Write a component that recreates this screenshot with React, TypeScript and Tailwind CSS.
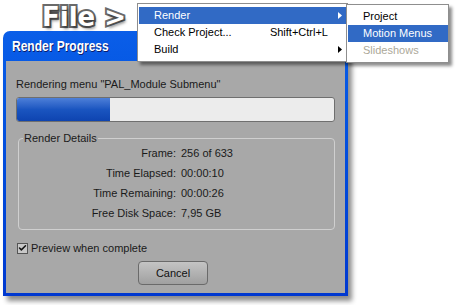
import { Check } from "lucide-react";

const font = "font-['Liberation_Sans',Arial,sans-serif]";

function Arrow({ color = "#000" }: { color?: string }) {
  return (
    <svg width="4" height="7" viewBox="0 0 4 7" className="shrink-0">
      <path d="M0 0 L4 3.5 L0 7 Z" fill={color} />
    </svg>
  );
}

function MenuRow({
  label,
  shortcut,
  active,
  arrow,
  disabled,
}: {
  label: string;
  shortcut?: string;
  active?: boolean;
  arrow?: boolean;
  disabled?: boolean;
}) {
  return (
    <div
      className={`flex h-[17px] items-center pl-[15px] pr-[5px] ${
        active ? "bg-[#316ac5] text-white" : disabled ? "text-[#aca899]" : "text-black"
      }`}
    >
      <span className="flex-1">{label}</span>
      {shortcut && <span className="mr-[14px]">{shortcut}</span>}
      {arrow && <Arrow color={active ? "#fff" : "#000"} />}
    </div>
  );
}

function DetailRow({ label, value }: { label: string; value: string }) {
  return (
    <div className="flex h-[20px] items-center">
      <span className="w-[157px] text-right">{label}</span>
      <span className="ml-[5px]">{value}</span>
    </div>
  );
}

export default function App() {
  return (
    <div className={`relative h-[305px] w-[460px] overflow-hidden bg-white text-[11px] ${font}`}>
      {/* File > heading */}
      <div className="absolute left-[42px] top-[-2px] font-['DejaVu_Sans',sans-serif] text-[26px] font-black text-white [-webkit-text-stroke:4px_#6a6a6a] [paint-order:stroke_fill] [text-shadow:2px_3px_3px_rgba(0,0,0,0.45)]">
        File &gt;
      </div>

      {/* dialog */}
      <div className="ml-[3px] mt-[31px] flex h-[265px] w-[345px] flex-col rounded-t-[7px] bg-gradient-to-b from-[#0a5ee8] to-[#0038d0] px-[3px] pb-[3px] shadow-[4px_5px_5px_rgba(0,0,0,0.45)]">
        <div className="flex h-[30px] shrink-0 items-center pl-[6px]">
          <span className="origin-left scale-x-[0.8] text-[15px] font-bold text-white [text-shadow:1px_1px_0_#0a1a6a]">
            Render Progress
          </span>
        </div>
        <div className="flex flex-1 flex-col bg-[#a8a8a8] px-[10px] text-[#1a1a1a]">
          <div className="mt-[16px] h-[15px] leading-[15px]">Rendering menu "PAL_Module Submenu"</div>
          <div className="mt-[5px] flex h-[25px] overflow-hidden rounded-[3px] border border-[#6f6f6f] bg-[#ececec]">
            <div className="w-[93px] bg-gradient-to-b from-[#4d7fd8] via-[#1a55c0] to-[#0e44b0]" />
          </div>

          <div className="relative mt-[16px] ml-[2px] h-[92px] w-[317px] rounded-[4px] border border-[#cfcfcf] pt-[4px]">
            <span className="absolute left-[4px] top-[-8px] bg-[#a8a8a8] px-px leading-[14px]">Render Details</span>
            <DetailRow label="Frame:" value="256 of 633" />
            <DetailRow label="Time Elapsed:" value="00:00:10" />
            <DetailRow label="Time Remaining:" value="00:00:26" />
            <DetailRow label="Free Disk Space:" value="7,95 GB" />
          </div>

          <div className="mt-[12px] flex h-[12px] items-center gap-[3px] pl-[1px]">
            <div className="flex h-[11px] w-[11px] items-center justify-center border border-[#555] bg-[#c8c8c8]">
              <Check size={10} strokeWidth={4} color="#111" />
            </div>
            <span>Preview when complete</span>
          </div>

          <div className="mt-[7px] flex justify-center pr-[5px]">
            <button className="h-[24px] w-[70px] rounded-[4px] border border-[#6a6a6a] bg-gradient-to-b from-[#c4c4c4] to-[#a0a0a0] text-[11px] text-[#111]">
              Cancel
            </button>
          </div>
        </div>
      </div>

      {/* main menu */}
      <div className="absolute left-[137px] top-[3px] w-[211px] border border-[#8e8e8e] bg-white py-[3px] pl-[1px] shadow-[3px_3px_3px_rgba(0,0,0,0.45)]">
        <MenuRow label="Render" active arrow />
        <MenuRow label="Check Project..." shortcut="Shift+Ctrl+L" />
        <MenuRow label="Build" arrow />
      </div>

      {/* submenu */}
      <div className="absolute left-[346px] top-[4px] w-[103px] border border-[#8e8e8e] bg-white py-[3px] pl-[1px] shadow-[3px_3px_3px_rgba(0,0,0,0.45)]">
        <MenuRow label="Project" />
        <MenuRow label="Motion Menus" active />
        <MenuRow label="Slideshows" disabled />
      </div>
    </div>
  );
}
